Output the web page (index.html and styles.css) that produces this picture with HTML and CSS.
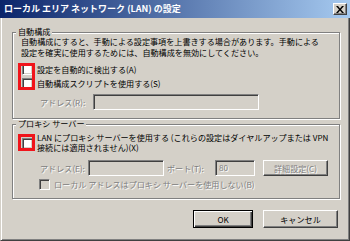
FILE: index.html
```html
<!DOCTYPE html>
<html lang="ja">
<head>
    <meta charset="UTF-8">
    <title>ローカル エリア ネットワーク (LAN) の設定</title>
    <link rel="stylesheet" href="styles.css">
</head>
<body>
    <div class="window">
        <div class="titlebar">
            <span class="title">ローカル エリア ネットワーク (LAN) の設定</span>
            <span class="close">
                <svg width="8" height="7" viewBox="0 0 8 7">
                    <path d="M0 0h2l2 2.5 2-2.5h2l-3 3.5 3 3.5h-2l-2-2.5-2 2.5h-2l3-3.5z" fill="#000"/>
                </svg>
            </span>
        </div>
        <div class="frame">
            <fieldset class="group group-auto">
                <legend>自動構成</legend>
                <p class="desc">自動構成にすると、手動による設定事項を上書きする場合があります。手動による<br>設定を確実に使用するためには、自動構成を無効にしてください。</p>
                <div class="checks">
                    <div class="marker marker-auto"></div>
                    <label class="check"><span class="box"></span>設定を自動的に検出する(A)</label>
                    <label class="check check-second"><span class="box"></span>自動構成スクリプトを使用する(S)</label>
                </div>
                <div class="row row-script">
                    <span class="disabled label-script">アドレス(R):</span>
                    <span class="input input-script"></span>
                </div>
            </fieldset>

            <fieldset class="group group-proxy">
                <legend>プロキシ サーバー</legend>
                <div class="check check-proxy">
                    <div class="marker marker-proxy"></div>
                    <span class="box"></span>
                    <span>LAN にプロキシ サーバーを使用する (これらの設定はダイヤルアップまたは VPN<br>接続には適用されません)(X)</span>
                </div>
                <div class="row row-proxy">
                    <span class="disabled label-address">アドレス(E):</span>
                    <span class="input input-address"></span>
                    <span class="disabled label-port">ポート(T):</span>
                    <span class="input input-port disabled">80</span>
                    <span class="btn btn-small disabled">詳細設定(C)</span>
                </div>
                <div class="check check-bypass">
                    <span class="box box-disabled"></span>
                    <span class="disabled">ローカル アドレスはプロキシ サーバーを使用しない(B)</span>
                </div>
            </fieldset>

            <div class="buttons">
                <span class="btn btn-default">OK</span>
                <span class="btn btn-cancel">キャンセル</span>
            </div>
        </div>
    </div>
</body>
</html>
```

FILE: styles.css
```css
body {
    margin: 0;
    background-color: #d4d0c8;
    color: #000;
    font-family: "Noto Sans CJK JP", "Liberation Sans", sans-serif;
    font-size: 8.1px;
}

.window {
    width: 350px;
    height: 241px;
    display: flex;
    flex-direction: column;
}

.titlebar {
    flex: none;
    height: 18px;
    box-sizing: border-box;
    padding: 0 3px 0 4px;
    display: flex;
    align-items: center;
    justify-content: space-between;
    background: linear-gradient(to right, #0a246a, #a6caf0);
    color: #fff;
    font-weight: bold;
    font-size: 9px;
    line-height: 18px;
}

.close {
    width: 14px;
    height: 12px;
    box-sizing: border-box;
    display: flex;
    align-items: center;
    justify-content: center;
    background-color: #d4d0c8;
    border: 1px solid;
    border-color: #fff #404040 #404040 #fff;
    box-shadow: inset -1px -1px #808080;
}

.frame {
    flex: 1;
    border: 1px solid;
    border-top: none;
    border-color: #d4d0c8 #404040 #404040 #d4d0c8;
    box-shadow: inset 1px 0 #fff, inset -1px -1px #808080;
    padding: 10px 9px 0 11px;
}

.group {
    margin: 0;
    padding: 0 8px 8px;
    border: 1px solid #808080;
    box-shadow: inset 1px 1px #fff, 1px 1px #fff;
}

.group legend {
    margin-left: -5px;
    padding: 0 2px;
    line-height: 8px;
    background-color: #d4d0c8;
}

.desc {
    margin: 0;
    line-height: 11px;
}

.checks {
    position: relative;
    margin-top: 6px;
}

.check {
    display: flex;
    align-items: center;
    gap: 4px;
    line-height: 11px;
    padding-left: 1px;
}

.check-second {
    margin-top: 3px;
}

.box {
    flex: none;
    width: 11px;
    height: 11px;
    box-sizing: border-box;
    background-color: #fff;
    border: 1px solid;
    border-color: #808080 #fff #fff #808080;
    box-shadow: inset 1px 1px #404040, inset -1px -1px #d4d0c8;
}

.box-disabled {
    background-color: #d4d0c8;
}

.marker {
    position: absolute;
    box-sizing: border-box;
    border: 3px solid #f0141b;
}

.marker-auto {
    left: -3px;
    top: -1px;
    width: 17px;
    height: 27px;
}

.marker-proxy {
    left: -3px;
    top: 1px;
    width: 17px;
    height: 17px;
}

.disabled {
    color: #808080;
    text-shadow: 1px 1px 0 #fff;
}

.row {
    display: flex;
    align-items: center;
    padding-left: 19px;
}

.row-script {
    margin-top: 5px;
}

.label-script {
    width: 53px;
}

.input {
    height: 16px;
    box-sizing: border-box;
    background-color: #d4d0c8;
    border: 1px solid;
    border-color: #808080 #fff #fff #808080;
    box-shadow: inset 1px 1px #404040, inset -1px -1px #d4d0c8;
    padding: 0 3px;
    line-height: 14px;
}

.input-script {
    width: 166px;
}

.group-proxy {
    margin-top: 1px;
}

.check-proxy {
    position: relative;
    margin-top: 5px;
    line-height: 10px;
}

.row-proxy {
    margin-top: 7px;
}

.label-address {
    width: 48px;
}

.input-address {
    width: 76px;
}

.label-port {
    width: 48px;
    padding-left: 3px;
}

.input-port {
    width: 40px;
}

.btn {
    box-sizing: border-box;
    display: flex;
    align-items: center;
    justify-content: center;
    background-color: #d4d0c8;
    border: 1px solid;
    border-color: #fff #404040 #404040 #fff;
    box-shadow: inset -1px -1px #808080;
}

.btn-small {
    width: 65px;
    height: 16px;
    margin-left: 8px;
}

.check-bypass {
    margin-top: 3px;
    padding-left: 18px;
    line-height: 11px;
}

.buttons {
    display: flex;
    justify-content: flex-end;
    gap: 10px;
    margin-top: 11px;
    padding-right: 2px;
}

.buttons .btn {
    height: 18px;
}

.btn-default {
    width: 60px;
    border-color: #000;
    box-shadow: inset 1px 1px #fff, inset -1px -1px #404040, inset -2px -2px #808080;
}

.btn-cancel {
    width: 75px;
}
```
